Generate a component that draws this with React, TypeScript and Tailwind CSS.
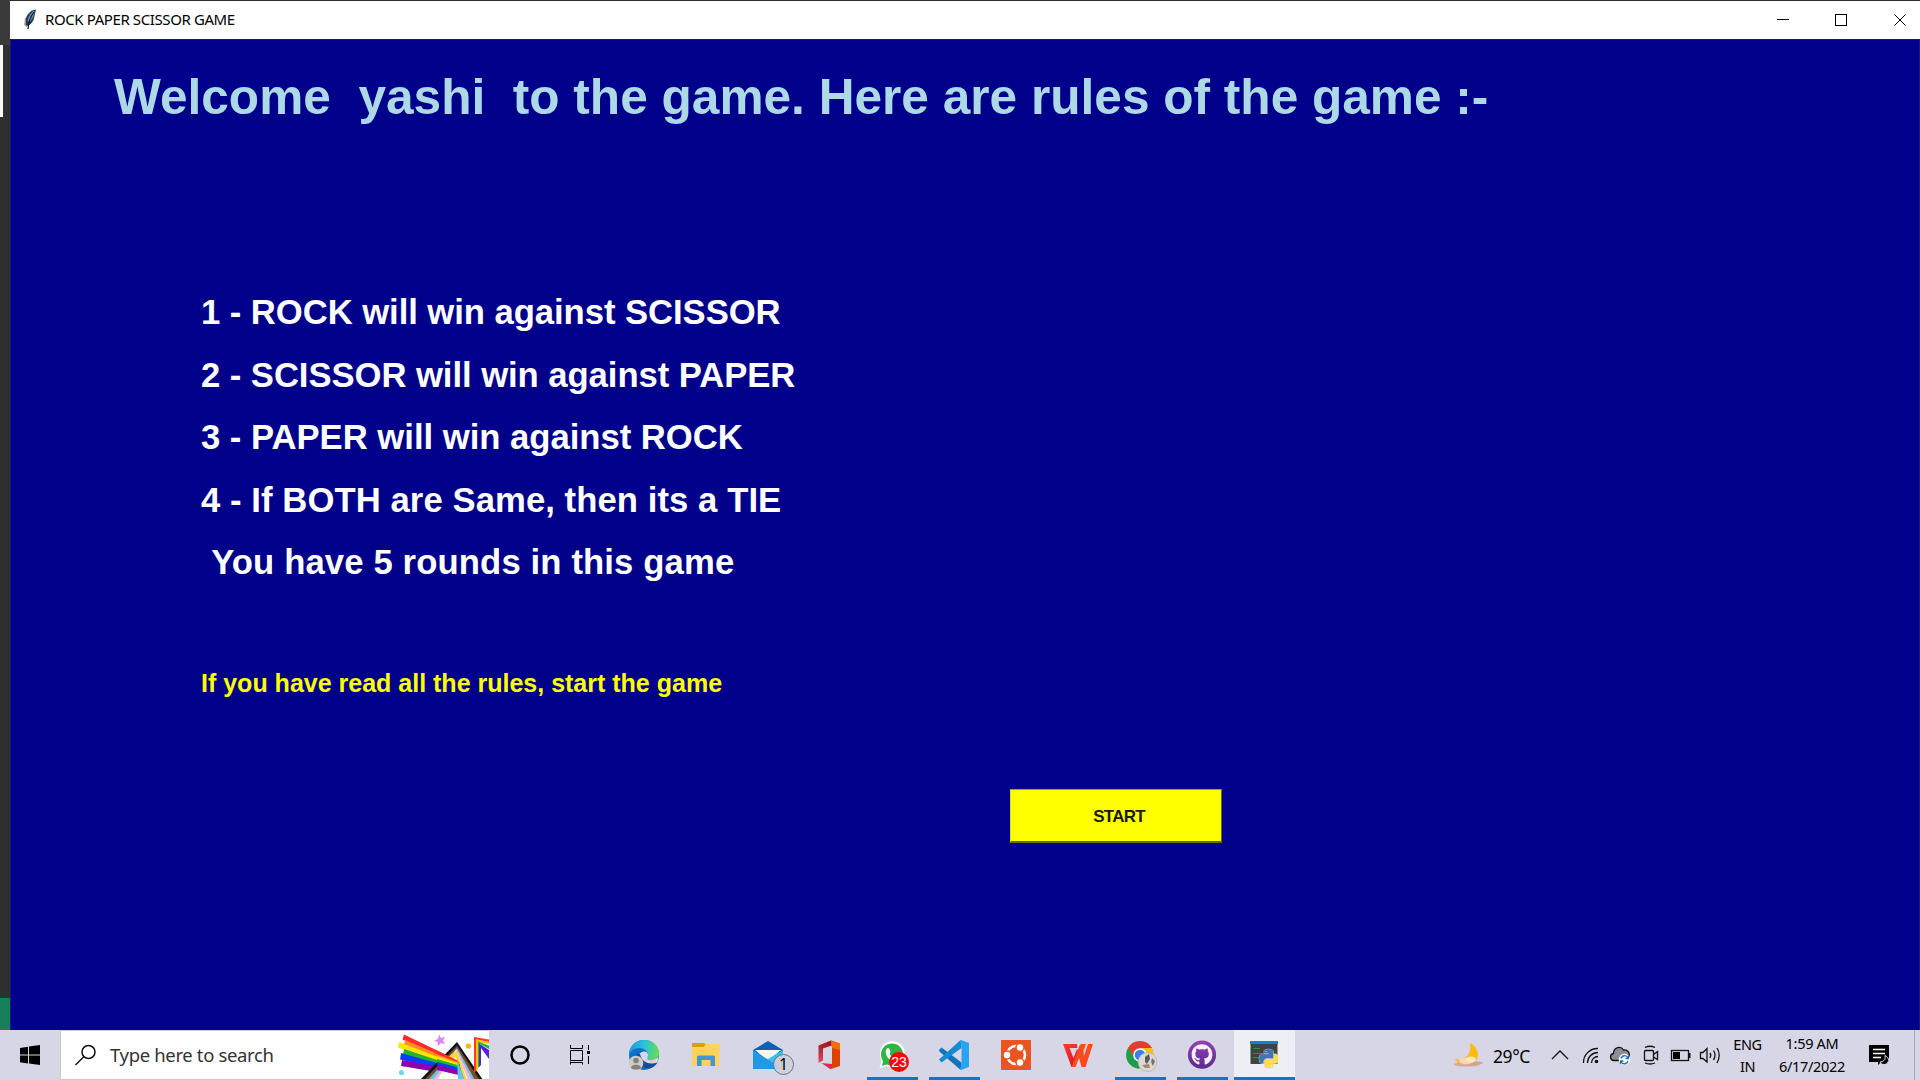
import React from "react";
import { FaGithub } from "react-icons/fa";

const PY =
  "M14.25.18l.9.2.73.26.59.3.45.32.34.34.25.34.16.33.1.3.04.26.02.2-.01.13V8.5l-.05.63-.13.55-.21.46-.26.38-.3.31-.33.25-.35.19-.35.14-.33.1-.3.07-.26.04-.21.02H8.77l-.69.05-.59.14-.5.22-.41.27-.33.32-.27.35-.2.36-.15.37-.1.35-.07.32-.04.27-.02.21v3.06H3.17l-.21-.03-.28-.07-.32-.12-.35-.18-.36-.26-.36-.36-.35-.46-.32-.59-.28-.73-.21-.88-.14-1.05-.05-1.23.06-1.22.16-1.04.24-.87.32-.71.36-.57.4-.44.42-.33.42-.24.4-.16.36-.1.32-.05.24-.01h.16l.06.01h8.16v-.83H6.18l-.01-2.75-.02-.37.05-.34.11-.31.17-.28.25-.26.31-.23.38-.2.44-.18.51-.15.58-.12.64-.1.71-.06.77-.04.84-.02 1.27.05zm-6.3 1.98l-.23.33-.08.41.08.41.23.34.33.22.41.09.41-.09.33-.22.23-.34.08-.41-.08-.41-.23-.33-.33-.22-.41-.09-.41.09z";

function Cell({ children, running, active }: { children: React.ReactNode; running?: boolean; active?: boolean }) {
  return (
    <div className="relative h-[50px] w-[62px] shrink-0">
      {active && <div className="absolute inset-y-0 left-px w-[61px] border-b-[3px] border-[#0078d7] bg-[#eeeef5]" />}
      <svg className="relative block h-[50px] w-[62px]" viewBox="0 0 62 50" fill="none">
        {children}
      </svg>
      {running && <div className="absolute bottom-0 left-[6px] h-[3px] w-[51px] bg-[#0078d7]" />}
    </div>
  );
}

function Feather() {
  return (
    <svg className="h-[22px] w-[14px]" viewBox="0 0 14 22">
      <path d="M12 0.5 L8 1.5 C4 4 1.5 8 1.5 13 L1.5 16 L3.5 17 C8 15 10 11 10.5 7 Z" fill="#2b3b4f" />
      <path d="M10.5 1.5 C7 3 4.500 7 3.500 12 L6 12.5 C8.5 10 10.500 6 10.5 1.5Z" fill="#5f94d2" />
      <path d="M10 3 C7 7 4.500 12 4 20" stroke="#15191f" strokeWidth="1.2" fill="none" />
      <path d="M1.5 9 L0.8 16 L3 17.5" stroke="#8d8d8d" strokeWidth="1" fill="none" />
    </svg>
  );
}

function PrideArt() {
  return (
    <svg className="block h-[48px] w-[92px]" viewBox="0 0 92 48">
      <path d="M7 3.5 L64 31 L64 36 L5.500 8.500Z" fill="#ff2a2a" />
      <path d="M8 9 L64 33 L64 38 L7 14Z" fill="#ff8c2a" />
      <path d="M2 11 L64 35 L64 39 L1 16.500Z" fill="#ffe600" />
      <path d="M7 18 L64 37 L64 41 L6 23.500Z" fill="#22b52a" />
      <path d="M4 22 L64 39 L64 43 L3 28.500Z" fill="#0a3cff" />
      <path d="M5 29 L64 40 L64 45 L4 35Z" fill="#8e00ac" />
      <path d="M23 49 L60 11 L86 49Z" fill="#111" />
      <path d="M27 49 L60 14.500 L83 49Z" fill="#7a4a2a" />
      <path d="M31 49 L60 17 L78 49Z" fill="#63c4f0" />
      <path d="M36 49 L59.500 18 L75 49Z" fill="#ffb5cc" />
      <path d="M40 49 L59 19 L71 49Z" fill="#fff" />
      <path d="M51 26 L59.500 20 L70 49 L65 49 L59 26 L53 30Z" fill="#ffd91a" />
      <path d="M42 24 L62 33 L66 45 L40 39Z" fill="#8e00ac" />
      <path d="M40 22 L62 32 L64 40 L40 34Z" fill="#0a3cff" />
      <path d="M40 21 L62 31 L63 37 L40 31Z" fill="#22b52a" />
      <path d="M40 20 L61 30 L62 34.500 L40 28Z" fill="#ffe600" />
      <path d="M40 20 L61 30 L61.500 32.500 L40 25Z" fill="#ff8c2a" />
      <path d="M38 18.500 L60.500 29.500 L61 31 L38 22.500Z" fill="#ff2a2a" />
      <path d="M60 29 L68 49 L61 49Z" fill="#63c4f0" />
      <path d="M77 6 L92 8.500 L92 11 L79 8.500 L79 40 L77 42Z" fill="#ff3a2a" />
      <path d="M79 8.300 L92 11 L92 13 L81 11 L81 38 L79 40Z" fill="#ffc400" />
      <path d="M81 10.500 L92 14.500 L92 18 L83 13 L83 35 L81 37Z" fill="#22b52a" />
      <path d="M82 12.500 L92 19 L92 28 L84 17 L84 34 L82 36Z" fill="#5a1fd0" />
      <path d="M42 3.500 L44 7 L48 6 L46 9.500 L48 13 L44 12 L41 15 L40.500 11 L37 9.500 L41 8Z" fill="#dd82fb" />
      <circle cx="71.500" cy="15" r="2.600" fill="#ffb400" />
      <circle cx="4.500" cy="41.500" r="2.600" fill="#6fd8ee" />
    </svg>
  );
}

function GameWindow() {
  return (
    <div className="flex h-[1030px] w-[1910px] flex-col border-t border-[#2d2d2d] bg-[#00008b]">
      <div className="flex h-[38px] shrink-0 items-center bg-white pl-[14px]">
        <Feather />
        <span className="ml-[7px] mt-[-2px] whitespace-pre font-['Noto_Sans',sans-serif] text-[15px] leading-[20px] tracking-[-0.4px] text-black">
          ROCK PAPER SCISSOR GAME
        </span>
        <svg className="ml-auto mr-[10px] h-[38px] w-[140px]" viewBox="0 0 140 38" fill="none" stroke="#000">
          <path d="M7 18.500H19" />
          <rect x="65.500" y="13.500" width="11" height="11" />
          <path d="M124.500 13.500L135.500 24.500M135.500 13.500L124.500 24.500" />
        </svg>
      </div>
      <div className="flex min-h-0 flex-1 flex-col border-x border-t border-[#16168f] font-['Liberation_Sans',Arial,sans-serif] font-bold">
        <h1 className="ml-[103px] mt-[27px] h-[60px] whitespace-pre text-[49.6px] leading-[60px] text-[#add8e6]">
          {"Welcome  yashi  to the game. Here are rules of the game :-"}
        </h1>
        <ul className="ml-[190px] mt-[154px] whitespace-pre text-[34.67px] leading-[62.5px] text-white">
          <li className="h-[62.5px] tracking-[-0.06px]">1 - ROCK will win against SCISSOR</li>
          <li className="h-[62.5px] tracking-[-0.06px]">2 - SCISSOR will win against PAPER</li>
          <li className="h-[62.5px] tracking-[-0.02px]">3 - PAPER will win against ROCK</li>
          <li className="h-[62.5px] tracking-[0.07px]">4 - If BOTH are Same, then its a TIE</li>
          <li className="h-[62.5px] pl-px tracking-[0.13px]">{" You have 5 rounds in this game"}</li>
        </ul>
        <p className="ml-[190px] mt-[69px] h-[40px] whitespace-pre text-[25.05px] leading-[40px] tracking-[-0.02px] text-[#ffff00]">
          If you have read all the rules, start the game
        </p>
        <button className="ml-[999px] mt-[86px] flex h-[54px] w-[212px] items-center justify-center border border-b-2 border-b-[#6b6b00] border-l-[#dcdc20] border-r-[#6b6b00] border-t-[#a0a020] bg-[#ffff00] pl-[6px] pt-[3px] text-[17px] tracking-[-0.75px] text-[#1a1a00]">
          START
        </button>
      </div>
    </div>
  );
}

function Taskbar() {
  return (
    <div className="flex h-[50px] w-[1920px] items-center overflow-hidden bg-[#d7d6e6] font-['Noto_Sans',sans-serif] text-black">
      <div className="h-[50px] w-[60px] shrink-0">
        <svg className="block h-[50px] w-[60px]" viewBox="0 0 60 50">
          <path d="M20 18L28 16.800V24.500H20ZM29 16.600L40 15V24.500H29ZM20 25.500H28V33.500L20 32.300ZM29 25.500H40V35L29 33.500Z" />
        </svg>
      </div>
      <div className="flex h-[50px] w-[429px] shrink-0 items-center border border-r-0 border-[#cacaca] bg-white">
        <svg className="ml-[13px] h-[24px] w-[24px]" viewBox="0 0 24 24" fill="none" stroke="#111" strokeWidth="1.500">
          <circle cx="14.500" cy="9" r="6.500" />
          <path d="M10 13.500L1.500 22" />
        </svg>
        <span className="ml-[12px] whitespace-pre text-[18.5px] leading-[24px] tracking-[-0.35px] text-[#333]">Type here to search</span>
        <div className="ml-auto">
          <PrideArt />
        </div>
      </div>

      <Cell>
        <circle cx="31" cy="25" r="8.500" stroke="#000" strokeWidth="2.500" />
      </Cell>
      <Cell>
        <path d="M19.500 15V18.500H31.500V15M19.500 20.500H31.500V30.500H19.500ZM19.500 34V31.500M19.500 34.500V32.500H31.500V34.500M37.500 15V20M37.500 26V34" stroke="#000" />
        <rect x="36" y="21" width="3" height="3" fill="#000" />
      </Cell>
      <Cell>
        <defs>
          <linearGradient id="edgeTop" x1="16" y1="20" x2="46" y2="24" gradientUnits="userSpaceOnUse">
            <stop offset="0" stopColor="#1d9be0" />
            <stop offset="0.5" stopColor="#2bc4d6" />
            <stop offset="1" stopColor="#6be03f" />
          </linearGradient>
        </defs>
        <circle cx="31" cy="25" r="15" fill="#0f6fc8" />
        <path d="M16 25C16 16 22 10 31 10C40 10 46 16 46 23C46 29 41 32 35 30C33 29 34 27 35 25C35 21 31 18 26 18C21 18 17.500 21 16 25Z" fill="url(#edgeTop)" />
        <path d="M25 28C25 24 28 21.500 32 21.500C34 22 35 23.500 35 25C34 27 33 29 35 30.500C39 32 43 31 45 29.500L44 33C37 36 27 35 25 28Z" fill="#d7d6e6" />
        <path d="M24 24C22 32 29 40 38 38C41 37 43 35 44.500 32.500C37 35 29 33 27 24Z" fill="#124f97" />
        <path d="M30 24C29 29 34 33 44.500 31L45.500 27C41 31 36 31 34 29C35 26 35 23 33 22.500Z" fill="#d7d6e6" />
        <circle cx="23" cy="33" r="7.300" fill="#cfcbc8" />
        <circle cx="23" cy="30.500" r="2.800" fill="#857f7b" />
        <path d="M18 38C18 33.500 28 33.500 28 38C25 40 21 40 18 38Z" fill="#857f7b" />
      </Cell>
      <Cell>
        <path d="M17 14Q17 13 18 13H29L31 15V20H17Z" fill="#e29b06" />
        <path d="M17 17H28.500L31 14H43.500Q44.500 14 44.500 15V35Q44.500 36 43.500 36H18Q17 36 17 35Z" fill="#ffd25c" />
        <path d="M22 36V27Q22 25.500 23.500 25.500H38.500Q40 25.500 40 27V36H35.500V30H26.500V36Z" fill="#3f96d8" />
      </Cell>
      <Cell>
        <path d="M16 20L31 11L46 20V28H16Z" fill="#0b62b5" />
        <path d="M18 20H44L34 28.500H28Z" fill="#f7f7f7" />
        <path d="M46 20L31 29L40 39H46Z" fill="#35c3f4" />
        <path d="M16 20L46 39H16Z" fill="#2199e4" />
        <circle cx="46.500" cy="34.500" r="10" fill="#d0d0d8" fillOpacity=".92" stroke="#70707a" />
        <text x="46.500" y="40" textAnchor="middle" fontSize="16" fill="#000">1</text>
      </Cell>
      <Cell>
        <defs>
          <linearGradient id="off" x1="0" y1="0" x2="0" y2="1">
            <stop offset="0" stopColor="#9c1019" />
            <stop offset="1" stopColor="#e94a60" />
          </linearGradient>
        </defs>
        <path d="M32 10.500L19.500 15.500V33L24 30.500V18.500L33 15.500Z" fill="url(#off)" />
        <path d="M32 10.500L41 13.500V36L32 39L33 33V15.500Z" fill="#dc4100" />
        <path d="M32 10.500L41 13.500V20L33 18Z" fill="#f36e0a" />
        <path d="M22.500 33L33 34V38.500L31 39Z" fill="#e8284a" />
      </Cell>
      <Cell running>
        <path d="M18.500 38L20.500 31C16 21 22 11.300 31 11.300C39 11.300 44 17 44 24C44 33 35 39.500 25.500 36Z" fill="#fff" />
        <circle cx="31" cy="24.500" r="11" fill="#2cb742" />
        <path d="M21 36L22.500 29L27 34Z" fill="#2cb742" />
        <path d="M26 18.500C28 17.500 28.500 18.500 29.500 21.500C29.500 23 28 23 29 24.500C31 28 34 29 35 28.500L38 30C37 33 32 33 28 29C25 26 23.500 21 26 18.500Z" fill="#fff" />
        <circle cx="38" cy="32" r="10" fill="#f80606" />
        <text x="38" y="37" textAnchor="middle" fontSize="14" fill="#fff" fontFamily="Liberation Sans">23</text>
      </Cell>
      <Cell running>
        <path d="M16 20L18.500 17.500L38.500 32.500V40L36.500 39L16.500 21.500Z" fill="#0f74be" />
        <path d="M16 29.500L36.500 11L38.500 10V18L18.500 32.500Z" fill="#1889d2" />
        <path d="M38 10L46 13V37L38 40L36.500 39L38.500 36V14L36.500 11Z" fill="#29a4f1" />
      </Cell>
      <Cell>
        <rect x="16" y="10" width="30" height="30" fill="#e95420" />
        <circle cx="31" cy="25" r="9" stroke="#fff" strokeWidth="2.600" />
        <circle cx="22" cy="25" r="4" fill="#fff" stroke="#e95420" strokeWidth="1.500" />
        <circle cx="35" cy="17.500" r="4" fill="#fff" stroke="#e95420" strokeWidth="1.500" />
        <circle cx="35" cy="32.500" r="4" fill="#fff" stroke="#e95420" strokeWidth="1.500" />
      </Cell>
      <Cell>
        <defs>
          <linearGradient id="wps" x1="16" y1="14" x2="32" y2="37" gradientUnits="userSpaceOnUse">
            <stop offset="0" stopColor="#ff3a35" />
            <stop offset="1" stopColor="#d6121a" />
          </linearGradient>
        </defs>
        <path d="M16 14H30V18H22.500L26.500 28L30 19L33 24L28 37H24.500Z" fill="url(#wps)" />
        <path d="M24.500 37L32.500 15.500Q33 14 35 14H39L36.500 21L37 26L41 14H46L38.500 37H34.500L32 28L28.500 37Z" fill="#ff4a20" />
      </Cell>
      <Cell running>
        <circle cx="31" cy="25" r="13.800" fill="#fbc116" />
        <path d="M19 18A13.800 13.800 0 0 1 43 18H31L25 28Z" fill="#e23b30" />
        <path d="M19 18A13.800 13.800 0 0 0 30 38.800L37 28H26Z" fill="#1e9c50" />
        <circle cx="31" cy="25" r="6.800" fill="#fff" />
        <circle cx="31" cy="25" r="5.300" fill="#3b7ded" />
        <circle cx="38.500" cy="32" r="9.500" fill="#dcd9d3" stroke="#a9a59e" strokeWidth=".6" />
        <path d="M36 27L40 24L41 29L38 34L36 32Z" fill="#5a5a5a" />
        <path d="M33 35L40 34L41 38L36 38Z" fill="#a08c6c" />
        <path d="M43 28L46 31L44 36L42 32Z" fill="#77736c" />
      </Cell>
      <Cell running>
        <defs>
          <linearGradient id="gh" x1="0" y1="0" x2="0" y2="1">
            <stop offset="0" stopColor="#9541b4" />
            <stop offset="1" stopColor="#5c2a8c" />
          </linearGradient>
        </defs>
        <circle cx="31" cy="24.700" r="14.100" fill="url(#gh)" />
        <FaGithub x={20.2} y={13.8} size={21.6} color="#f4eff8" />
      </Cell>
      <Cell active>
        <rect x="17.500" y="11" width="27" height="23" fill="#404244" />
        <rect x="17" y="11" width="28" height="3" fill="#0e83d4" />
        <path d="M20 18.500H27M20 23.500H29M20 27.500H26" stroke="#2c8b3a" strokeWidth="1.200" />
        <g transform="translate(26.300 19.300) scale(.79)">
          <path d={PY} fill="#3a78ad" stroke="#f4f4f4" strokeWidth="1" paintOrder="stroke" />
          <path d={PY} fill="#ffdb4f" stroke="#f4f4f4" strokeWidth="1" paintOrder="stroke" transform="rotate(180 12 12)" />
        </g>
      </Cell>

      <div className="ml-auto flex h-[50px] w-[470px] shrink-0 items-center">
        <svg className="h-[50px] w-[40px] shrink-0" viewBox="0 0 40 50">
          <path d="M20 13C30 18 31 30 21 35C13 37 7 34 5 29C14 32 22 25 20 13Z" fill="#fdbb12" />
          <ellipse cx="17" cy="34.500" rx="13" ry="2" fill="#d9a79c" />
          <ellipse cx="25" cy="33" rx="8" ry="1.600" fill="#cfa39b" />
          <ellipse cx="16" cy="31" rx="7" ry="3.200" fill="#f3d9ad" />
          <ellipse cx="21" cy="29.500" rx="5" ry="3" fill="#fbe8bd" />
        </svg>
        <span className="w-[50px] shrink-0 whitespace-pre pl-[3px] pt-[2px] text-[17.5px] leading-[24px] tracking-[-0.4px]">29°C</span>
        <svg className="h-[50px] w-[185px] shrink-0" viewBox="1540 1030 185 50" fill="none" stroke="#111" strokeWidth="1.300">
          <path d="M1552 1059L1560 1051L1568 1059" />
          <g>
            <circle cx="1596.500" cy="1061.500" r="1.800" fill="#111" stroke="none" />
            <path d="M1583.500 1063A14 14 0 0 1 1598 1048.500M1587.500 1063A10.500 10.500 0 0 1 1598 1052.500M1591.500 1063A6.500 6.500 0 0 1 1598 1056.500" />
          </g>
          <path d="M1614 1060.500C1610 1060.500 1609 1054.500 1613.500 1053.500C1613.500 1047 1621 1045.500 1623.500 1050C1628 1049.500 1630.500 1053 1629 1057L1622 1060.500Z" fill="#8e8e92" />
          <circle cx="1624.500" cy="1059.500" r="5.800" fill="#fff" stroke="none" />
          <path d="M1621 1058.500A3.700 3.700 0 0 1 1628 1058M1628.500 1055.500V1058.500H1625.500M1628 1061A3.700 3.700 0 0 1 1621 1061.500M1620.500 1064V1061H1623.500" stroke="#1c70c4" />
          <rect x="1644.500" y="1050.500" width="9" height="10" rx="1" />
          <path d="M1653.500 1054.500L1657.500 1051.500V1059.500L1653.500 1057M1645 1047.500Q1650 1045 1655 1047.500M1645 1063Q1650 1065 1655 1063" />
          <rect x="1671.500" y="1050.500" width="17" height="10" />
          <rect x="1673" y="1052" width="7" height="7" fill="#000" stroke="none" />
          <path d="M1689.500 1053V1058" strokeWidth="2" />
          <path d="M1700.500 1052.500H1703L1707 1048.500V1062L1703 1058.500H1700.500ZM1710 1053Q1711.500 1055 1710 1058M1713.500 1050.500Q1716.500 1055 1713.500 1060M1717 1048Q1721.500 1055 1717 1063" />
        </svg>
        <div className="w-[45px] shrink-0 whitespace-pre text-center text-[14.5px] leading-[22px] tracking-[-0.4px]">
          <div>ENG</div>
          <div>IN</div>
        </div>
        <div className="mt-[-1px] w-[84px] shrink-0 whitespace-pre text-center text-[14.5px] leading-[22.5px] tracking-[-0.3px]">
          <div>1:59 AM</div>
          <div>6/17/2022</div>
        </div>
        <svg className="h-[50px] w-[60px] shrink-0" viewBox="1854 1030 60 50" fill="none">
          <path d="M1869 1045H1889V1062H1881L1878 1065V1062H1869Z" fill="#000" />
          <path d="M1873 1049.500H1885M1873 1053.500H1885M1873 1057.500H1881" stroke="#fff" strokeWidth="1.300" />
          <path d="M1885 1055.500C1890 1057.500 1889.500 1064 1884.500 1064.500C1882 1064.500 1880.500 1063.500 1880 1062C1883 1062 1886 1060 1885 1055.500Z" fill="#000" stroke="#e4e4ee" strokeWidth="1" />
        </svg>
        <div className="h-[50px] w-px bg-[#a9a9b5]" />
      </div>
    </div>
  );
}

export default function App() {
  return (
    <div className="flex h-[1080px] w-[1920px] flex-col overflow-hidden">
      <div className="flex h-[1030px]">
        <div className="flex w-[10px] shrink-0 flex-col bg-[#2f2f2f]">
          <div className="h-[45px] bg-[#3a3a3a]" />
          <div className="h-[72px] w-[3px] bg-[#f7f7f7]" />
          <div className="mt-auto h-[32px] bg-[#168058]" />
        </div>
        <GameWindow />
      </div>
      <Taskbar />
    </div>
  );
}
